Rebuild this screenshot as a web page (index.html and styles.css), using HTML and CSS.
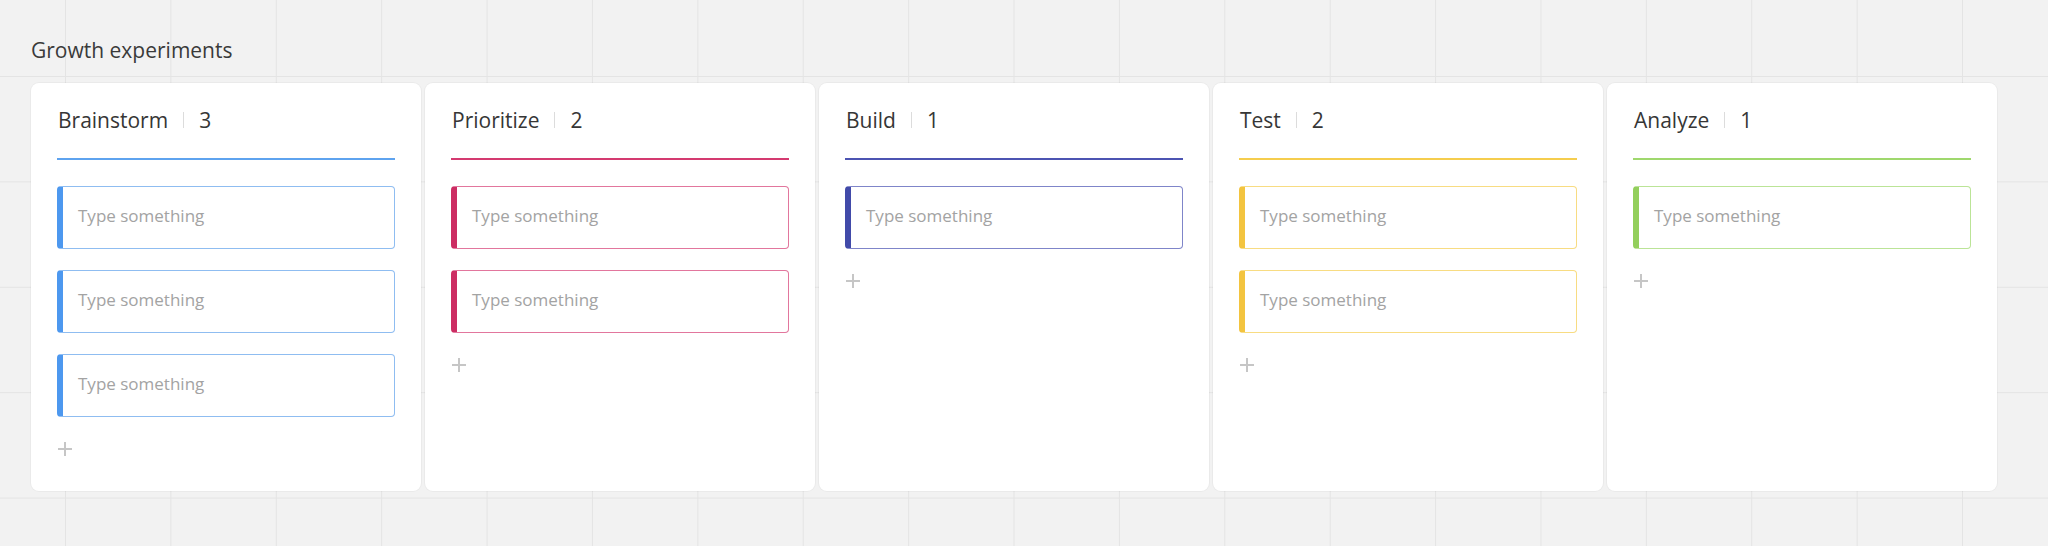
FILE: index.html
```html
<!DOCTYPE html>
<html lang="en">
<head>
<meta charset="utf-8">
<title>Growth experiments</title>
<link rel="stylesheet" href="styles.css">
</head>
<body>
<div class="board">
  <h1 class="board-title">Growth experiments</h1>
  <div class="columns">
    <section class="column c-blue">
      <header class="col-head"><span class="col-name">Brainstorm</span><span class="sep"></span><span class="col-count">3</span></header>
      <div class="items">
        <div class="item">Type something</div>
        <div class="item">Type something</div>
        <div class="item">Type something</div>
      </div>
      <div class="add"><span class="plus"></span></div>
    </section>
    <section class="column c-pink">
      <header class="col-head"><span class="col-name">Prioritize</span><span class="sep"></span><span class="col-count">2</span></header>
      <div class="items">
        <div class="item">Type something</div>
        <div class="item">Type something</div>
      </div>
      <div class="add"><span class="plus"></span></div>
    </section>
    <section class="column c-indigo">
      <header class="col-head"><span class="col-name">Build</span><span class="sep"></span><span class="col-count">1</span></header>
      <div class="items">
        <div class="item">Type something</div>
      </div>
      <div class="add"><span class="plus"></span></div>
    </section>
    <section class="column c-yellow">
      <header class="col-head"><span class="col-name">Test</span><span class="sep"></span><span class="col-count">2</span></header>
      <div class="items">
        <div class="item">Type something</div>
        <div class="item">Type something</div>
      </div>
      <div class="add"><span class="plus"></span></div>
    </section>
    <section class="column c-green">
      <header class="col-head"><span class="col-name">Analyze</span><span class="sep"></span><span class="col-count">1</span></header>
      <div class="items">
        <div class="item">Type something</div>
      </div>
      <div class="add"><span class="plus"></span></div>
    </section>
  </div>
</div>
</body>
</html>
```

FILE: styles.css
```css
html, body {
  margin: 0;
  padding: 0;
}
body {
  width: 2048px;
  height: 546px;
  overflow: hidden;
  font-family: "Open Sans", "Noto Sans", sans-serif;
  background-color: #f2f2f2;
  background-image:
    linear-gradient(to right, #e4e4e4 1px, transparent 1px),
    linear-gradient(to bottom, #e4e4e4 1px, transparent 1px);
  background-size: 105.4px 105.4px;
  background-position: 65px 76px;
}
.board {
  padding: 36px 0 0 31px;
}
.board-title {
  margin: 0;
  font-size: 21px;
  line-height: 28px;
  font-weight: 400;
  color: #3a3a3a;
}
.columns {
  display: flex;
  gap: 4px;
  margin-top: 19px;
}
.column {
  box-sizing: border-box;
  width: 390px;
  height: 408px;
  background: #fff;
  border-radius: 8px;
  padding: 23px 26px 0 26px;
  box-shadow: 0 0 0 1px rgba(0, 0, 0, 0.03);
}
.col-head {
  display: flex;
  align-items: center;
  height: 28px;
  padding-bottom: 24px;
  border-bottom: 2px solid var(--line);
  font-size: 21px;
  line-height: 28px;
  color: #363636;
}
.col-name {
  padding-left: 1px;
}
.sep {
  width: 1px;
  height: 16px;
  background: #dcdcdc;
  margin: 0 15px 0 15px;
}
.items {
  display: flex;
  flex-direction: column;
  gap: 21px;
  margin-top: 26px;
}
.item {
  box-sizing: border-box;
  height: 63px;
  display: flex;
  align-items: center;
  border: 1px solid var(--border);
  border-left: 6px solid var(--accent);
  border-radius: 4px;
  padding-left: 15px;
  padding-bottom: 4px;
  font-size: 17px;
  color: #a3a3a3;
}
.add {
  height: 14px;
  margin-top: 25px;
  display: flex;
  align-items: center;
}
.plus {
  position: relative;
  display: block;
  width: 14px;
  height: 14px;
  margin-left: 1px;
}
.plus::before,
.plus::after {
  content: "";
  position: absolute;
  background: #c6c6c6;
}
.plus::before {
  left: 0;
  right: 0;
  top: 6px;
  height: 1.6px;
}
.plus::after {
  top: 0;
  bottom: 0;
  left: 6px;
  width: 1.6px;
}
.c-blue   { --line: #5ea3ef; --border: #8fbdf1; --accent: #4d98ef; }
.c-pink   { --line: #d43a70; --border: #e2769d; --accent: #cc2d63; }
.c-indigo { --line: #4c54b2; --border: #7f85c9; --accent: #414aa9; }
.c-yellow { --line: #f5cd4e; --border: #f8dc82; --accent: #f3c43f; }
.c-green  { --line: #9fd86d; --border: #bbe497; --accent: #93cf5c; }
```
